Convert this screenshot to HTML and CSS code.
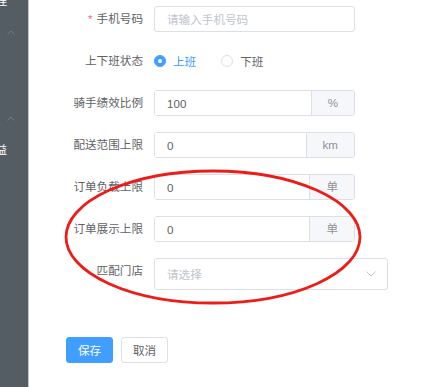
FILE: index.html
```html
<!DOCTYPE html>
<html lang="zh-CN">

<head>
  <meta charset="UTF-8">
  <meta name="viewport" content="width=device-width, initial-scale=1.0">
  <title>骑手信息</title>
  <link rel="stylesheet" href="styles.css">
</head>

<body>
  <div class="page">
    <!-- Side menu (scrolled, only the edge shows) -->
    <div class="sidebar">
      <div class="menu-text first">管理</div>
      <div class="menu-arrow">
        <svg width="8" height="5" viewBox="0 0 8 5"><polyline points="0.5,4.5 4,1 7.5,4.5" fill="none" stroke="#737a81" stroke-width="1"/></svg>
      </div>
      <div class="menu-gap"></div>
      <div class="menu-arrow">
        <svg width="8" height="5" viewBox="0 0 8 5"><polyline points="0.5,4.5 4,1 7.5,4.5" fill="none" stroke="#737a81" stroke-width="1"/></svg>
      </div>
      <div class="menu-text">权益</div>
    </div>

    <!-- Rider form -->
    <div class="main">
      <form class="rider-form">
        <div class="form-item">
          <label class="form-label"><span class="required">*</span>手机号码</label>
          <input class="text-input" type="text" placeholder="请输入手机号码">
        </div>

        <div class="form-item">
          <label class="form-label">上下班状态</label>
          <div class="radio-group">
            <span class="radio checked"><span class="radio-dot"></span><span class="radio-text">上班</span></span>
            <span class="radio"><span class="radio-dot"></span><span class="radio-text">下班</span></span>
          </div>
        </div>

        <div class="form-item">
          <label class="form-label">骑手绩效比例</label>
          <div class="input-group">
            <input type="text" value="100">
            <span class="append">%</span>
          </div>
        </div>

        <div class="form-item">
          <label class="form-label">配送范围上限</label>
          <div class="input-group">
            <input type="text" value="0">
            <span class="append">km</span>
          </div>
        </div>

        <div class="form-item">
          <label class="form-label">订单负载上限</label>
          <div class="input-group">
            <input type="text" value="0">
            <span class="append">单</span>
          </div>
        </div>

        <div class="form-item">
          <label class="form-label">订单展示上限</label>
          <div class="input-group">
            <input type="text" value="0">
            <span class="append">单</span>
          </div>
        </div>

        <div class="form-item">
          <label class="form-label">匹配门店</label>
          <div class="select">
            <span class="placeholder">请选择</span>
            <svg width="10" height="6" viewBox="0 0 10 6"><polyline points="0.5,0.5 5,5 9.5,0.5" fill="none" stroke="#c0c4cc" stroke-width="1"/></svg>
          </div>
        </div>

        <div class="form-actions">
          <button class="btn btn-primary" type="button">保存</button>
          <button class="btn" type="button">取消</button>
        </div>
      </form>
    </div>

    <!-- hand-drawn red circle on top of the screenshot -->
    <svg class="mark" width="440" height="387" viewBox="0 0 440 387">
      <ellipse cx="213" cy="237" rx="147" ry="66" fill="none" stroke="#ec1d18" stroke-width="2.8"/>
    </svg>
  </div>
</body>

</html>
```

FILE: styles.css
```css
* {
  margin: 0;
  padding: 0;
  box-sizing: border-box;
  font-family: 'Liberation Sans', 'Noto Sans CJK SC', sans-serif;
}

body {
  background-color: #fff;
  font-size: 11.6px;
  color: #606266;
}

.page {
  position: relative;
  display: flex;
  height: 387px;
  overflow: hidden;
}

/* sidebar */
.sidebar {
  width: 29px;
  background-color: #545c64;
  border-right: 1px solid #c3c7cb;
  display: flex;
  flex-direction: column;
  overflow: hidden;
}

.menu-text {
  height: 15px;
  line-height: 15px;
  color: #fff;
  white-space: nowrap;
  display: flex;
  justify-content: flex-end;
  padding-right: 21px;
  font-size: 11.6px;
}

.menu-text.first {
  margin-top: -7px;
}

.menu-arrow {
  height: 48px;
  display: flex;
  align-items: center;
  padding-left: 7px;
}

.menu-gap {
  height: 38px;
}

/* main */
.main {
  flex: 1;
  padding: 6px 0 0 37px;
}

.form-item {
  display: flex;
  align-items: flex-start;
  margin-bottom: 16px;
}

.form-label {
  width: 88px;
  padding-right: 11px;
  text-align: right;
  line-height: 26px;
  color: #606266;
}

.required {
  color: #f56c6c;
  margin-right: 4px;
}

.text-input {
  width: 201px;
  height: 26px;
  border: 1px solid #dcdfe6;
  border-radius: 3px;
  padding: 0 12px;
  font-size: 11.6px;
  color: #606266;
  outline: none;
}

.text-input::placeholder,
.input-group input::placeholder {
  color: #c0c4cc;
}

/* radios */
.radio-group {
  display: flex;
  align-items: center;
  height: 26px;
}

.radio {
  display: inline-flex;
  align-items: center;
  margin-right: 25px;
}

.radio-dot {
  width: 12px;
  height: 12px;
  border: 1px solid #dcdfe6;
  border-radius: 50%;
  display: flex;
  align-items: center;
  justify-content: center;
}

.radio-text {
  margin-left: 7px;
  color: #606266;
}

.radio.checked .radio-dot {
  background-color: #409eff;
  border-color: #409eff;
}

.radio.checked .radio-dot::after {
  content: '';
  width: 4px;
  height: 4px;
  border-radius: 50%;
  background-color: #fff;
}

.radio.checked .radio-text {
  color: #409eff;
}

/* input with unit */
.input-group {
  width: 201px;
  height: 26px;
  display: flex;
  border: 1px solid #dcdfe6;
  border-radius: 3px;
  overflow: hidden;
}

.input-group input {
  flex: 1;
  min-width: 0;
  border: none;
  outline: none;
  padding: 0 12px;
  font-size: 11.6px;
  color: #606266;
}

.input-group .append {
  background-color: #f5f7fa;
  border-left: 1px solid #dcdfe6;
  color: #909399;
  padding: 0 16px;
  line-height: 24px;
}

/* select */
.select {
  width: 234px;
  height: 32px;
  border: 1px solid #dcdfe6;
  border-radius: 3px;
  padding: 0 11px 0 12px;
  display: flex;
  align-items: center;
  justify-content: space-between;
}

.select .placeholder {
  color: #c0c4cc;
}

/* buttons */
.form-actions {
  display: flex;
  gap: 8px;
  margin-top: 47px;
}

.btn {
  width: 47px;
  height: 26px;
  border: 1px solid #dcdfe6;
  border-radius: 3px;
  background-color: #fff;
  color: #606266;
  font-size: 11.6px;
  cursor: pointer;
}

.btn-primary {
  background-color: #409eff;
  border-color: #409eff;
  color: #fff;
}

/* annotation */
.mark {
  position: absolute;
  left: 0;
  top: 0;
  pointer-events: none;
}
```
